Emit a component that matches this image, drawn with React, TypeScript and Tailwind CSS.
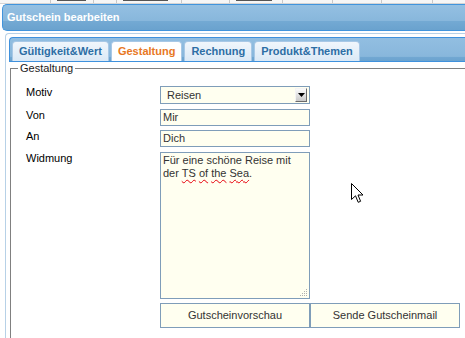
import React from "react";

const tabs = ["Gültigkeit&Wert", "Gestaltung", "Rechnung", "Produkt&Themen"];
const active = "Gestaltung";

function TopStrip() {
    // tail end of the table that sits behind the dialog
    const cells = [51, 43, 23, 65, 48, 53, 50, 49, 51, 40];
    return (
        <div className="flex h-[4px] overflow-hidden border-b border-[#d4d4d4] bg-[#f6f6f6]">
            {cells.map((w, i) => (
                <div key={i} className="relative h-full shrink-0 border-r border-[#c8c8c8]" style={{ width: w }}>
                    {(i === 1 || i === 3 || i === 5) && (
                        <div className="ml-[6px] mt-0 h-[1px] w-[70%] bg-[#555]" />
                    )}
                </div>
            ))}
        </div>
    );
}

function SelectBox({ value }: { value: string }) {
    return (
        <div className="flex h-[18px] w-[150px] items-center border border-[#7f9db9] bg-[#fffff0] pl-[6px] text-[11px] text-[#333]">
            <span>{value}</span>
            <div className="ml-auto mr-[2px] flex h-[14px] w-[12px] items-center justify-center border border-t-[#f4f4f4] border-l-[#f4f4f4] border-r-[#6b6b6b] border-b-[#6b6b6b] bg-[linear-gradient(180deg,#fbfbfb,#c9c9c9)]">
                <svg width="7" height="4" viewBox="0 0 7 4">
                    <path d="M0 0 H7 L3.5 4 Z" fill="#000" />
                </svg>
            </div>
        </div>
    );
}

function TextInput({ value }: { value: string }) {
    return (
        <div className="flex h-[17px] w-[150px] items-center border border-[#7f9db9] bg-[#fffff0] px-[2px] text-[11px] text-[#333]">
            {value}
        </div>
    );
}

function Misspelled({ children }: { children: React.ReactNode }) {
    return <span className="underline decoration-red-600 decoration-wavy decoration-1 underline-offset-2">{children}</span>;
}

function Row({ label, children }: { label: string; children: React.ReactNode }) {
    return (
        <div className="flex">
            <div className="w-[134px] shrink-0 text-[11px] leading-[13px] text-black">{label}</div>
            {children}
        </div>
    );
}

export default function App() {
    return (
        <div className="relative h-[338px] w-[465px] overflow-hidden bg-white font-['Liberation_Sans',Arial,sans-serif]">
            <div className="w-[520px]">
                <TopStrip />

                <div className="ml-[2px] flex h-[27px] items-center rounded-l-[5px] border border-r-0 border-[#4194dc] bg-[linear-gradient(180deg,#94c0e2_0%,#88b7dc_62%,#73a9d3_66%,#6aa2ce_100%)] pl-[4px] text-[11px] font-bold text-white">
                    Gutschein bearbeiten
                </div>

                <div className="ml-[5px] mt-[2px] rounded-tl-[4px] border-l border-t border-[#b7d1e7] pl-[3px] pt-[3px]">
                    <div className="flex h-[25px] items-end gap-[2px] rounded-tl-[4px] border-y border-l border-[#3f91dd] bg-[linear-gradient(180deg,#92bee1_0%,#88b7dc_80%,#71a7d2_84%,#6ba3cf_100%)] pl-[2px]">
                        {tabs.map((t) => (
                            <div
                                key={t}
                                className={
                                    t === active
                                        ? "flex h-[20px] items-center rounded-t-[4px] border border-b-0 border-[#a8c8e6] bg-white px-[6px] text-[11px] font-bold text-[#e8781f]"
                                        : "flex h-[20px] items-center rounded-t-[4px] border border-b-0 border-[#a8c8e6] bg-[linear-gradient(180deg,#f0f6fc,#dbe9f6)] px-[6px] text-[11px] font-bold text-[#2d6ea5]"
                                }
                            >
                                {t}
                            </div>
                        ))}
                    </div>

                    <fieldset className="ml-[1px] mt-0 h-[300px] border border-[#808080]">
                        <legend className="ml-[7px] px-[2px] text-[11px] leading-[13px] text-[#222]">Gestaltung</legend>
                        <div className="flex flex-col pl-[15px] pt-[11px]">
                            <Row label="Motiv">
                                <SelectBox value="Reisen" />
                            </Row>
                            <div className="mt-[5px]">
                                <Row label="Von">
                                    <TextInput value="Mir" />
                                </Row>
                            </div>
                            <div className="mt-[4px]">
                                <Row label="An">
                                    <TextInput value="Dich" />
                                </Row>
                            </div>
                            <div className="mt-[5px]">
                                <Row label="Widmung">
                                    <div className="relative h-[147px] w-[150px] border border-[#7f9db9] bg-[#fffff0] px-[2px] pt-[1px] text-[11px] leading-[13px] text-[#333]">
                                        Für eine schöne Reise mit
                                        <br />
                                        der <Misspelled>TS</Misspelled> <Misspelled>of</Misspelled>{" "}
                                        <Misspelled>the</Misspelled> <Misspelled>Sea</Misspelled>.
                                        <svg className="absolute bottom-[1px] right-[1px]" width="9" height="9" viewBox="0 0 9 9">
                                            <g fill="#b0b0b0">
                                                <rect x="7" y="1" width="1" height="1" />
                                                <rect x="5" y="3" width="1" height="1" />
                                                <rect x="7" y="3" width="1" height="1" />
                                                <rect x="3" y="5" width="1" height="1" />
                                                <rect x="5" y="5" width="1" height="1" />
                                                <rect x="7" y="5" width="1" height="1" />
                                                <rect x="1" y="7" width="1" height="1" />
                                                <rect x="3" y="7" width="1" height="1" />
                                                <rect x="5" y="7" width="1" height="1" />
                                                <rect x="7" y="7" width="1" height="1" />
                                            </g>
                                        </svg>
                                    </div>
                                </Row>
                            </div>
                            <div className="ml-[134px] mt-[4px] flex">
                                <button className="h-[25px] w-[150px] border border-[#7f9db9] bg-[#fffff0] text-[11px] text-[#333]">
                                    Gutscheinvorschau
                                </button>
                                <button className="h-[25px] w-[150px] border border-[#7f9db9] bg-[#fffff0] text-[11px] text-[#333]">
                                    Sende Gutscheinmail
                                </button>
                            </div>
                        </div>
                    </fieldset>
                </div>
            </div>

            {/* mouse pointer */}
            <svg className="absolute left-[351px] top-[183px]" width="13" height="21" viewBox="0 0 13 21">
                <path d="M0.5 0.5 V16.5 L4.5 12.8 L7.2 19.3 L9.6 18.3 L7 12 H12 Z" fill="#fff" stroke="#000" strokeWidth="1" />
            </svg>
        </div>
    );
}
